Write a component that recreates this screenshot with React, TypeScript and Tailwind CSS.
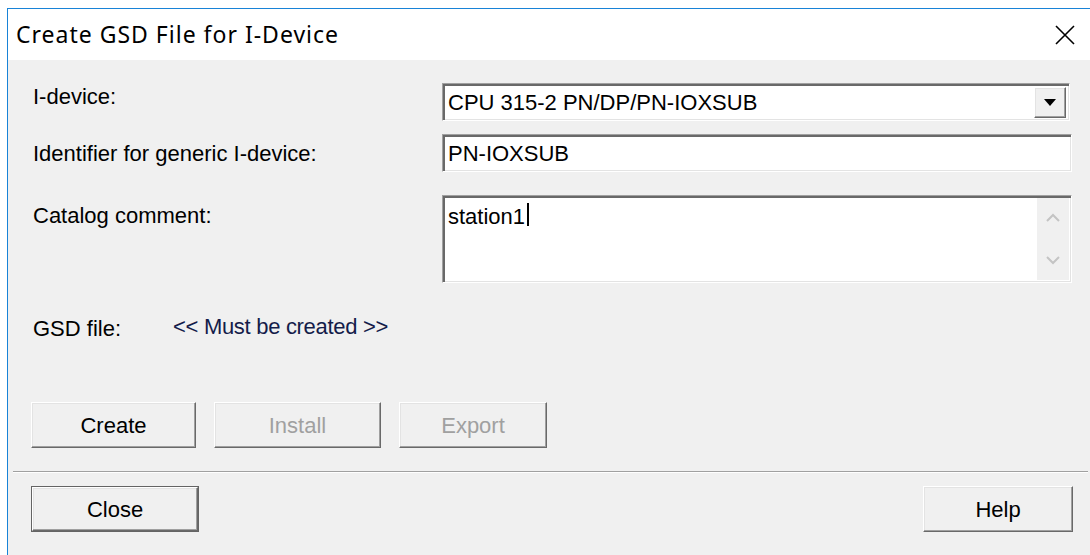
import React from 'react';

const sunken =
  'bg-white border border-t-[#a0a0a0] border-l-[#a0a0a0] border-b-white border-r-white shadow-[inset_2px_2px_0_#696969,inset_-1px_-1px_0_#e3e3e3]';

const raised =
  'bg-[#f0f0f0] border border-t-white border-l-white border-b-[#696969] border-r-[#696969] shadow-[inset_-1px_-1px_0_#a0a0a0,inset_1px_1px_0_#e3e3e3]';

function WinButton({
  label,
  width,
  disabled = false,
  isDefault = false,
}: {
  label: string;
  width: string;
  disabled?: boolean;
  isDefault?: boolean;
}) {
  const face = (
    <div
      className={`${raised} flex-1 flex items-center justify-center text-[22px] leading-[25px] ${
        disabled ? 'text-[#a0a0a0]' : 'text-black'
      }`}
    >
      {label}
    </div>
  );
  if (isDefault) {
    return <div className={`${width} h-[46px] flex border border-[#646464]`}>{face}</div>;
  }
  return <div className={`${width} h-[46px] flex`}>{face}</div>;
}

function Chevron({ up }: { up?: boolean }) {
  return (
    <svg width="14" height="9" viewBox="0 0 14 9" className="block">
      <path
        d={up ? 'M1 8 L7 2 L13 8' : 'M1 1 L7 7 L13 1'}
        fill="none"
        stroke="#c4c4c4"
        strokeWidth="2"
      />
    </svg>
  );
}

export default function App() {
  return (
    <div className="w-[1090px] h-[555px] overflow-hidden bg-white font-['Liberation_Sans',Arial,sans-serif]">
      <div className="ml-[7px] mt-[8px] w-[1091px] h-[600px] border-l border-t border-[#1883d7] flex flex-col">
        {/* Title bar */}
        <div className="h-[51px] bg-white flex items-center justify-between pl-[8px] pr-[23px]">
          <span className="font-['Noto_Sans',sans-serif] text-[23px] tracking-[1px] text-black leading-none">
            Create GSD File for I-Device
          </span>
          <svg width="20" height="20" viewBox="0 0 20 20">
            <path d="M1 1 L19 19 M19 1 L1 19" stroke="#000" strokeWidth="1.6" />
          </svg>
        </div>

        {/* Dialog body */}
        <div className="flex-1 bg-[#f0f0f0] flex flex-col text-[22px] leading-[25px] text-black">
          <div className="pl-[25px] pt-[23px] flex flex-col">
            {/* I-device */}
            <div className="flex items-start">
              <div className="w-[409px] mt-[1px]">I-device:</div>
              <div className={`${sunken} w-[628px] h-[38px] flex items-center pl-[5px] pr-[3px]`}>
                <span className="flex-1 mt-[1px]">CPU 315-2 PN/DP/PN-IOXSUB</span>
                <div className={`${raised} w-[32px] h-[31px] flex items-center justify-center`}>
                  <svg width="12" height="7" viewBox="0 0 12 7">
                    <path d="M0 0 L12 0 L6 7 Z" fill="#000" />
                  </svg>
                </div>
              </div>
            </div>

            {/* Identifier */}
            <div className="flex items-start mt-[13px]">
              <div className="w-[409px] mt-[7px]">Identifier for generic I-device:</div>
              <div className={`${sunken} w-[630px] h-[38px] flex items-center pl-[5px]`}>
                <span className="mt-[1px]">PN-IOXSUB</span>
              </div>
            </div>

            {/* Catalog comment */}
            <div className="flex items-start mt-[23px]">
              <div className="w-[409px] mt-[8px]">Catalog comment:</div>
              <div className={`${sunken} w-[630px] h-[88px] flex`}>
                <div className="flex-1 pl-[5px] pt-[8px] flex items-start">
                  <span>station1</span>
                  <span className="w-[2px] h-[23px] bg-black ml-[2px] -mt-[1px]" />
                </div>
                <div className="w-[32px] my-[2px] mr-[2px] bg-[#f0f0f0] flex flex-col items-center justify-between py-[15px]">
                  <Chevron up />
                  <Chevron />
                </div>
              </div>
            </div>

            {/* GSD file status */}
            <div className="flex items-start mt-[31px]">
              <div className="w-[140px] mt-[2px]">GSD file:</div>
              <div className="text-[#141c4a] tracking-[-0.3px]">&lt;&lt; Must be created &gt;&gt;</div>
            </div>
          </div>

          {/* Action buttons */}
          <div className="flex gap-[18px] pl-[23px] mt-[61px]">
            <WinButton label="Create" width="w-[165px]" />
            <WinButton label="Install" width="w-[167px]" disabled />
            <WinButton label="Export" width="w-[148px]" disabled />
          </div>

          <div className="ml-[5px] mr-[10px] mt-[23px] h-[2px] border-t border-[#a0a0a0] border-b border-b-white" />

          {/* Footer */}
          <div className="flex justify-between pl-[23px] pr-[25px] mt-[13px]">
            <WinButton label="Close" width="w-[168px]" isDefault />
            <WinButton label="Help" width="w-[150px]" />
          </div>
        </div>
      </div>
    </div>
  );
}
